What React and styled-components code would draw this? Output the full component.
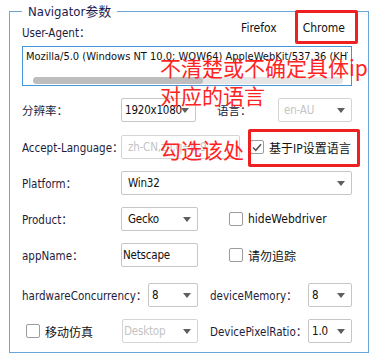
import React from 'react';
import styled, { createGlobalStyle } from 'styled-components';

const GlobalStyle = createGlobalStyle`
  html, body { margin: 0; padding: 0; background: #fff; }
  body {
    font-family: "DejaVu Sans Condensed", "DejaVu Sans", "Noto Sans CJK SC", sans-serif;
    font-size: 11.5px;
    color: #1c1c3c;
  }
  * { box-sizing: border-box; }
`;

const Canvas = styled.div`
  position: relative;
  width: 375px;
  height: 357px;
  padding: 3px 0 0 9px;
  overflow: hidden;
`;

const Frame = styled.fieldset`
  width: 360px;
  min-width: 0;
  height: 350px;
  margin: 0;
  padding: 0 16px 0 12px;
  border: 1px solid #6aa5d6;
  display: flex;
  flex-direction: column;
`;

const Legend = styled.legend`
  padding: 0 6px;
  font-size: 13px;
  line-height: 17px;
  color: #1c1c50;
`;

const Header = styled.div`
  display: flex;
  align-items: center;
  justify-content: space-between;
  height: 24px;
`;

const Tabs = styled.div`
  display: flex;
  align-self: flex-start;
  gap: 26px;
  margin-right: 7px;
`;

const Tab = styled.span`
  font-size: 12px;
  line-height: 16px;
  color: #111;
`;

const UaBox = styled.div`
  height: 40px;
  min-width: 0;
  margin-top: 2px;
  border: 1px solid #4394d8;
  padding: 2px 3px 0;
`;

const UaText = styled.div`
  white-space: nowrap;
  overflow: hidden;
  font-size: 11px;
  line-height: 16px;
  color: #111;
`;

const ScrollTrack = styled.div`
  margin: 12px 5px 0 7px;
  height: 7px;
  border-radius: 4px;
  background: #e6e6e6;
`;

const ScrollThumb = styled.div`
  width: 170px;
  height: 100%;
  border-radius: 4px;
  background: #bdbdbd;
`;

const Row = styled.div`
  display: flex;
  align-items: center;
  height: 24px;
  margin-top: ${(p) => p.$top ?? 12}px;
`;

const Label = styled.span`
  flex: none;
  width: ${(p) => (p.$w ? `${p.$w}px` : 'auto')};
  margin-left: ${(p) => p.$ml || 0}px;
  white-space: nowrap;
  color: #1c1c3c;
`;

const Field = styled.div`
  position: relative;
  flex: ${(p) => (p.$grow ? 1 : 'none')};
  width: ${(p) => (p.$w ? `${p.$w}px` : 'auto')};
  height: 24px;
  display: flex;
  align-items: center;
  padding: 0 10px 0 ${(p) => p.$pl ?? 5}px;
  border: 1px solid ${(p) => (p.$disabled ? '#d4d4d4' : '#c6c6c6')};
  border-radius: 2px;
  background: #fff;
  font-size: 11.5px;
  letter-spacing: -0.2px;
  color: ${(p) => (p.$disabled ? '#c4c4c4' : '#111')};
  white-space: nowrap;
  overflow: hidden;
`;

const Arrow = styled.span`
  position: absolute;
  right: 6px;
  top: 50%;
  margin-top: -2px;
  border-left: 4.5px solid transparent;
  border-right: 4.5px solid transparent;
  border-top: 5px solid #5e5e5e;
`;

const Check = styled.label`
  display: flex;
  align-items: center;
  gap: 5px;
  flex: none;
  margin-left: ${(p) => p.$ml || 0}px;
  color: #111;
  font-size: 12px;
`;

const Box = styled.span`
  width: 14px;
  height: 14px;
  border: 1px solid #9c9c9c;
  border-radius: 2px;
  background: #fff;
  display: flex;
  align-items: center;
  justify-content: center;
`;

const Note = styled.div`
  position: absolute;
  left: ${(p) => p.$x}px;
  top: ${(p) => p.$y}px;
  font-family: "Noto Sans CJK SC", sans-serif;
  font-size: 21px;
  line-height: 28px;
  color: #ff2424;
  white-space: nowrap;
  pointer-events: none;
`;

const Mark = styled.div`
  position: absolute;
  left: ${(p) => p.$x}px;
  top: ${(p) => p.$y}px;
  width: ${(p) => p.$w}px;
  height: ${(p) => p.$h}px;
  border: 3px solid #ee2020;
  border-radius: 2px;
  pointer-events: none;
`;

function Select({ value, w, grow, disabled, pl }) {
  return (
    <Field $w={w} $grow={grow} $disabled={disabled} $pl={pl}>
      {value}
      <Arrow />
    </Field>
  );
}

function Checkbox({ label, checked, ml }) {
  return (
    <Check $ml={ml}>
      <Box>
        {checked && (
          <svg width="10" height="9" viewBox="0 0 10 9">
            <path d="M1 4.5 L3.8 7.3 L9 1.3" fill="none" stroke="#555" strokeWidth="1.6" />
          </svg>
        )}
      </Box>
      {label}
    </Check>
  );
}

export default function App() {
  return (
    <>
      <GlobalStyle />
      <Canvas>
        <Frame>
          <Legend>Navigator参数</Legend>
          <Header>
            <Label>User-Agent：</Label>
            <Tabs>
              <Tab>Firefox</Tab>
              <Tab>Chrome</Tab>
            </Tabs>
          </Header>
          <UaBox>
            <UaText>Mozilla/5.0 (Windows NT 10.0; WOW64) AppleWebKit/537.36 (KHTML, like Gecko)</UaText>
            <ScrollTrack>
              <ScrollThumb />
            </ScrollTrack>
          </UaBox>

          <Row>
            <Label $w={99}>分辨率：</Label>
            <Select w={75} value="1920x1080" pl={3} />
            <Label $w={61} $ml={21}>语言：</Label>
            <Select w={74} value="en-AU" disabled />
          </Row>
          <Row $top={13}>
            <Label $w={99}>Accept-Language：</Label>
            <Field $w={119} $disabled $pl={6}>zh-CN,zh;q=0.9</Field>
            <Checkbox ml={10} label="基于IP设置语言" checked />
          </Row>
          <Row>
            <Label $w={99}>Platform：</Label>
            <Select grow value="Win32" pl={6} />
          </Row>
          <Row>
            <Label $w={99}>Product：</Label>
            <Select w={77} value="Gecko" pl={6} />
            <Checkbox ml={31} label="hideWebdriver" />
          </Row>
          <Row>
            <Label $w={99}>appName：</Label>
            <Field $w={77} $pl={1}>Netscape</Field>
            <Checkbox ml={31} label="请勿追踪" />
          </Row>
          <Row $top={16}>
            <Label $w={126}>hardwareConcurrency：</Label>
            <Select w={50} value="8" pl={3} />
            <Label $w={98} $ml={12}>deviceMemory：</Label>
            <Select w={44} value="8" pl={3} />
          </Row>
          <Row>
            <Label $w={100}>
              <Checkbox ml={4} label="移动仿真" />
            </Label>
            <Select w={76} value="Desktop" disabled pl={1} />
            <Label $w={98} $ml={12}>DevicePixelRatio：</Label>
            <Select w={44} value="1.0" pl={3} />
          </Row>
        </Frame>

        <Mark $x={295} $y={10} $w={63} $h={34} />
        <Mark $x={248} $y={129} $w={112} $h={38} />
        <Note $x={160} $y={53}>
          不清楚或不确定具体ip
          <br />
          对应的语言
        </Note>
        <Note $x={160} $y={135}>勾选该处</Note>
      </Canvas>
    </>
  );
}
